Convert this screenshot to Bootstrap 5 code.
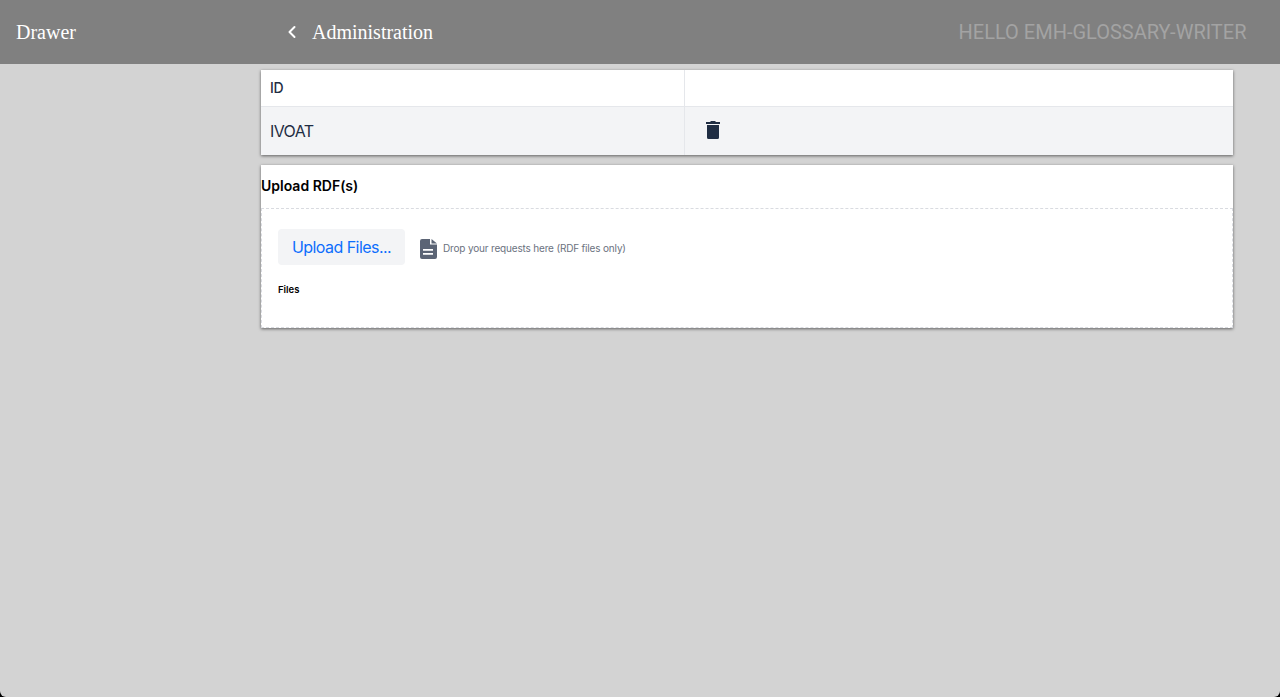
<!DOCTYPE html>
<html lang="en">

<head>
    <meta charset="UTF-8">
    <meta name="viewport" content="width=device-width, initial-scale=1.0">
    <title>Administration</title>
    <link href="https://cdn.jsdelivr.net/npm/bootstrap@5.3.0/dist/css/bootstrap.min.css" rel="stylesheet">
    <style>
        html { height: 100%; background-color: #000; }
        body {
            height: 100%;
            background-color: #d3d3d3;
            border-radius: 0 0 6px 6px;
            font-family: Inter, "Liberation Sans", sans-serif;
            overflow: hidden;
        }

        .top-bar {
            height: 64px;
            background-color: #808080;
            color: #fff;
            font-family: "Liberation Serif", serif;
            font-size: 20px;
        }
        .drawer-slot { width: 261px; padding-left: 16px; flex: none; }
        .back-icon { width: 10px; height: 14px; margin-left: 26px; margin-right: 15px; }
        .hello {
            font-family: Roboto, sans-serif;
            font-size: 20px;
            color: #a3a3a3;
            padding-right: 33.5px;
        }

        .page-main { width: 972px; padding-top: 6px; }
        .shade { box-shadow: 0 1px 3px rgba(0, 0, 0, .55); background: #fff; }

        .id-table { margin: 0; color: #1f2d43; table-layout: fixed; }
        .id-table td { padding: 0 9px; vertical-align: middle; border-color: #e5e7eb; }
        .id-table .head-row td { height: 36px; font-size: 14px; font-weight: 500; letter-spacing: -.3px; background: #fff; }
        .id-table .data-row td { height: 49px; font-size: 16px; letter-spacing: -.6px; background: #f3f4f6; border-bottom: 0; }
        .id-cell { width: 423px; border-right: 1px solid #e5e7eb; }
        .trash-icon { width: 14px; height: 18px; margin-left: 12px; margin-top: -1px; display: block; }

        .upload-card {
            margin-top: 10px;
            height: 163px;
            color: #000;
        }
        .upload-title {
            height: 43px;
            font-size: 14px;
            font-weight: 600;
            line-height: 42px;
        }
        .upload-body {
            height: 120px;
            border: 1px dashed #d9dbe0;
            padding: 20px 16px 0;
        }
        .upload-btn {
            background: #f3f4f6;
            color: #0d6efd;
            border: 0;
            border-radius: 4px;
            font-size: 16px;
            letter-spacing: -.55px;
            width: 127px;
            height: 36px;
            padding: 0;
        }
        .file-icon { width: 17px; height: 20px; margin-top: 4px; margin-left: 15px; margin-right: 6px; }
        .drop-hint { font-size: 10px; letter-spacing: -.17px; color: #6b7280; padding-top: 3px; }
        .files-label { font-size: 9.500px; font-weight: 600; margin-top: 18px; }
    </style>
</head>

<body>
    <!-- Header -->
    <header class="top-bar d-flex align-items-center">
        <div class="drawer-slot">Drawer</div>
        <svg class="back-icon" viewBox="0 0 10 14" fill="none" stroke="#fff" stroke-width="2" stroke-linecap="round" stroke-linejoin="round">
            <path d="M7.500 2 2.500 7l5 5"/>
        </svg>
        <div>Administration</div>
        <div class="hello ms-auto">HELLO EMH-GLOSSARY-WRITER</div>
    </header>

    <div class="d-flex">
        <div class="drawer-slot"></div>
        <main class="page-main">
            <!-- Glossaries -->
            <div class="shade">
                <table class="table id-table">
                    <tbody>
                        <tr class="head-row">
                            <td class="id-cell">ID</td>
                            <td></td>
                        </tr>
                        <tr class="data-row">
                            <td class="id-cell">IVOAT</td>
                            <td>
                                <svg class="trash-icon" viewBox="0 0 14 18" fill="#1f2d43">
                                    <path d="M5 0h4l1 1h4v2H0V1h4zM1 4h12v12.500A1.500 1.500 0 0 1 11.500 18h-9A1.500 1.500 0 0 1 1 16.500z"/>
                                </svg>
                            </td>
                        </tr>
                    </tbody>
                </table>
            </div>

            <!-- Upload -->
            <div class="shade upload-card">
                <div class="upload-title">Upload RDF(s)</div>
                <div class="upload-body">
                    <div class="d-flex align-items-center">
                        <button type="button" class="btn upload-btn">Upload Files...</button>
                        <svg class="file-icon" viewBox="0 0 17 20">
                            <path fill="#5b6475" fill-rule="evenodd" d="M2 0h8v5.500h7V18a2 2 0 0 1-2 2H2a2 2 0 0 1-2-2V2a2 2 0 0 1 2-2zm1 10v1.800h10V10zm0 4v1.800h10V14z"/>
                            <path fill="#5b6475" d="M11.500 0 17 4.500h-5.500z"/>
                        </svg>
                        <span class="drop-hint">Drop your requests here (RDF files only)</span>
                    </div>
                    <div class="files-label">Files</div>
                </div>
            </div>
        </main>
    </div>

    <script src="https://cdn.jsdelivr.net/npm/bootstrap@5.3.0/dist/js/bootstrap.bundle.min.js"></script>
</body>

</html>
